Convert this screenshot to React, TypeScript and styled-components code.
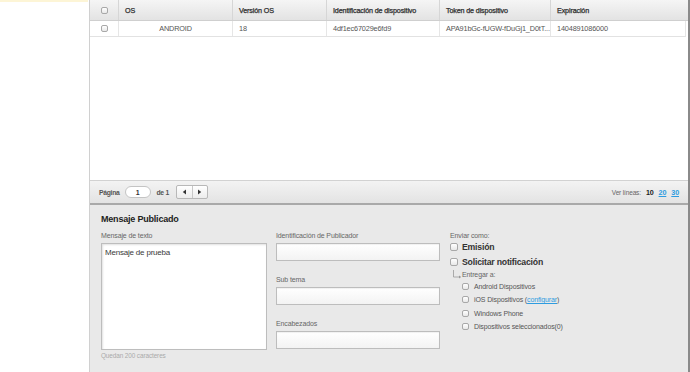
import React from "react";
import styled, { createGlobalStyle } from "styled-components";

const Global = createGlobalStyle`
  html, body { margin: 0; padding: 0; background: #fff; }
  body { font-family: "Liberation Sans", Arial, sans-serif; }
  * { box-sizing: border-box; }
`;

const Page = styled.div`
  display: flex;
  width: 690px;
  height: 372px;
  overflow: hidden;
`;

const Side = styled.div`
  width: 89px;
  flex: none;
`;

const Note = styled.div`
  height: 2px;
  width: 88px;
  background: #fdf5d6;
`;

const Panel = styled.div`
  flex: 1;
  display: flex;
  flex-direction: column;
  border-left: 1px solid #d0d0d0;
  border-right: 2px solid #8a8a8a;
`;

const Grid = styled.div`
  height: 180px;
  background: #fff;
  display: flex;
  flex-direction: column;
`;

const Row = styled.div<{ $head?: boolean }>`
  display: grid;
  grid-template-columns: 29px 114px 94px 113px 111px 1fr;
  height: ${(p) => (p.$head ? "21px" : "16px")};
  background: ${(p) => (p.$head ? "linear-gradient(#f5f5f5, #e3e3e3)" : "#fff")};
  border-bottom: 1px solid ${(p) => (p.$head ? "#cfcfcf" : "#e2e2e2")};
  margin-right: ${(p) => (p.$head ? "0" : "2px")};
  border-right: ${(p) => (p.$head ? "none" : "1px solid #e6e6e6")};
`;

const Cell = styled.div<{ $head?: boolean; $center?: boolean }>`
  display: flex;
  align-items: center;
  justify-content: ${(p) => (p.$center ? "center" : "flex-start")};
  padding: 0 6px;
  font-size: ${(p) => (p.$head ? "7.2px" : "7.3px")};
  letter-spacing: -0.15px;
  color: ${(p) => (p.$head ? "#2e2e2e" : "#555")};
  -webkit-text-stroke: ${(p) => (p.$head ? "0.25px #2e2e2e" : "0")};
  border-right: 1px solid ${(p) => (p.$head ? "#d6d6d6" : "#e6e6e6")};
  white-space: nowrap;
  overflow: hidden;
  &:last-child { border-right: none; }
`;

const Box = styled.span<{ $size?: number }>`
  display: inline-block;
  width: ${(p) => p.$size ?? 7}px;
  height: ${(p) => p.$size ?? 7}px;
  border: 1px solid #a8a8a8;
  border-radius: 2px;
  background: linear-gradient(#fff, #e8e8e8);
  flex: none;
`;

const Pager = styled.div`
  height: 25px;
  display: flex;
  align-items: center;
  padding: 0 9px;
  background: linear-gradient(#f3f3f3, #e3e3e3);
  border-top: 1px solid #d2d2d2;
  border-bottom: 2px solid #a9a9a9;
  font-size: 6.8px;
  letter-spacing: -0.3px;
  color: #555;
`;

const PageLabel = styled.span`
  font-weight: 700;
  color: #555;
`;

const PageInput = styled.div`
  width: 26px;
  height: 12px;
  margin: 0 6px 0 5px;
  border: 1px solid #c4c4c4;
  border-radius: 6px;
  background: #fff;
  display: flex;
  align-items: center;
  justify-content: center;
  font-size: 7px;
  font-weight: 700;
  color: #333;
`;

const Of = styled.span`
  font-weight: 700;
  color: #555;
  margin-right: 7px;
`;

const NavGroup = styled.div`
  display: flex;
  height: 14px;
  border: 1px solid #b8b8b8;
  border-radius: 2px;
  background: linear-gradient(#fff, #ececec);
`;

const NavBtn = styled.div`
  width: 15px;
  display: flex;
  align-items: center;
  justify-content: center;
  & + & { border-left: 1px solid #c8c8c8; }
`;

const Spacer = styled.div`
  flex: 1;
`;

const Lines = styled.div`
  display: flex;
  align-items: center;
  gap: 5px;
  font-size: 6.5px;
  letter-spacing: -0.15px;
  color: #666;
`;

const Num = styled.span<{ $active?: boolean }>`
  font-weight: 700;
  font-size: 7.2px;
  color: ${(p) => (p.$active ? "#222" : "#2e9ce0")};
  text-decoration: ${(p) => (p.$active ? "none" : "underline")};
`;

const Form = styled.div`
  flex: 1;
  background: #e9e9e9;
  padding: 7px 12px 0 11px;
`;

const Title = styled.div`
  font-size: 9px;
  letter-spacing: -0.2px;
  font-weight: 700;
  color: #222;
  line-height: 14px;
  margin-bottom: 5px;
`;

const Cols = styled.div`
  display: grid;
  grid-template-columns: 166px 164px 1fr;
  column-gap: 9px;
`;

const Col = styled.div`
  display: flex;
  flex-direction: column;
`;

const Label = styled.div<{ $gap?: number; $after?: number }>`
  font-size: 7px;
  letter-spacing: -0.12px;
  color: #666;
  line-height: 10px;
  margin-top: ${(p) => p.$gap ?? 0}px;
  margin-bottom: ${(p) => p.$after ?? 2}px;
`;

const TextArea = styled.div`
  height: 107px;
  background: #fff;
  border: 1px solid #bdbdbd;
  box-shadow: inset 1px 1px 2px rgba(0, 0, 0, 0.12);
  padding: 4px 3px;
  font-size: 8px;
  letter-spacing: -0.2px;
  color: #3a3a3a;
`;

const Hint = styled.div`
  font-size: 6.4px;
  letter-spacing: -0.1px;
  color: #aaa;
  margin-top: 2px;
`;

const Input = styled.div`
  height: 18px;
  background: linear-gradient(#fff, #f3f3f3);
  border: 1px solid #bdbdbd;
  box-shadow: inset 0 1px 1px rgba(0, 0, 0, 0.06);
`;

const SendCol = styled.div`
  display: flex;
  flex-direction: column;
  padding-left: 1px;
`;

const BigOpt = styled.div`
  display: flex;
  align-items: center;
  gap: 4px;
  height: 15px;
  font-size: 8.7px;
  letter-spacing: -0.2px;
  font-weight: 700;
  color: #333;
`;

const Deliver = styled.div`
  display: flex;
  align-items: center;
  height: 11px;
  font-size: 7px;
  letter-spacing: -0.12px;
  color: #666;
`;

const SubList = styled.div`
  display: flex;
  flex-direction: column;
  padding-left: 12px;
`;

const SubOpt = styled.div`
  display: flex;
  align-items: center;
  gap: 5px;
  height: 13.3px;
  font-size: 7px;
  letter-spacing: -0.12px;
  color: #555;
`;

const Link = styled.span`
  color: #2e9ce0;
  text-decoration: underline;
`;

const headers = ["OS", "Versión OS", "Identificación de dispositivo", "Token de dispositivo", "Expiración"];

export default function App() {
  return (
    <>
      <Global />
      <Page>
        <Side>
          <Note />
        </Side>
        <Panel>
          <Grid>
            <Row $head>
              <Cell $head $center>
                <Box />
              </Cell>
              {headers.map((h) => (
                <Cell key={h} $head>
                  {h}
                </Cell>
              ))}
            </Row>
            <Row>
              <Cell $center>
                <Box />
              </Cell>
              <Cell $center>ANDROID</Cell>
              <Cell>18</Cell>
              <Cell>4df1ec67029e6fd9</Cell>
              <Cell>APA91bGc-fUGW-fDuGj1_D0tT...</Cell>
              <Cell>1404891086000</Cell>
            </Row>
          </Grid>
          <Pager>
            <PageLabel>Página</PageLabel>
            <PageInput>1</PageInput>
            <Of>de 1</Of>
            <NavGroup>
              <NavBtn>
                <svg width="5" height="6" viewBox="0 0 5 6">
                  <path d="M4 0.5 L0.8 3 L4 5.5 Z" fill="#333" />
                </svg>
              </NavBtn>
              <NavBtn>
                <svg width="5" height="6" viewBox="0 0 5 6">
                  <path d="M1 0.5 L4.2 3 L1 5.5 Z" fill="#333" />
                </svg>
              </NavBtn>
            </NavGroup>
            <Spacer />
            <Lines>
              <span>Ver líneas:</span>
              <Num $active>10</Num>
              <Num>20</Num>
              <Num>30</Num>
            </Lines>
          </Pager>
          <Form>
            <Title>Mensaje Publicado</Title>
            <Cols>
              <Col>
                <Label>Mensaje de texto</Label>
                <TextArea>Mensaje de prueba</TextArea>
                <Hint>Quedan 200 caracteres</Hint>
              </Col>
              <Col>
                <Label>Identificación de Publicador</Label>
                <Input />
                <Label $gap={14}>Sub tema</Label>
                <Input />
                <Label $gap={14}>Encabezados</Label>
                <Input />
              </Col>
              <SendCol>
                <Label $after={-2}>Enviar como:</Label>
                <BigOpt>
                  <Box $size={8} />
                  Emisión
                </BigOpt>
                <BigOpt>
                  <Box $size={8} />
                  Solicitar notificación
                </BigOpt>
                <Deliver>
                  <svg width="12" height="10" viewBox="0 0 12 10">
                    <path d="M3.5 0 V7 H10" stroke="#999" strokeWidth="0.8" fill="none" />
                    <path d="M9 5.6 L11.2 7 L9 8.4 Z" fill="#999" />
                  </svg>
                  <span>Entregar a:</span>
                </Deliver>
                <SubList>
                  <SubOpt>
                    <Box />
                    Android Dispositivos
                  </SubOpt>
                  <SubOpt>
                    <Box />
                    <span>
                      iOS Dispositivos (<Link>configurar</Link>)
                    </span>
                  </SubOpt>
                  <SubOpt>
                    <Box />
                    Windows Phone
                  </SubOpt>
                  <SubOpt>
                    <Box />
                    Dispositivos seleccionados(0)
                  </SubOpt>
                </SubList>
              </SendCol>
            </Cols>
          </Form>
        </Panel>
      </Page>
    </>
  );
}
